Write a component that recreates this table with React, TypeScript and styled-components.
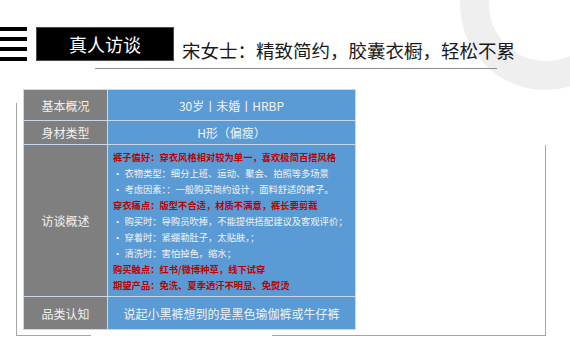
import styled, { createGlobalStyle } from 'styled-components';

const GlobalStyle = createGlobalStyle`
  html, body {
    margin: 0;
    padding: 0;
    background: #ffffff;
  }
  body {
    font-family: 'Noto Sans CJK SC', 'Noto Sans', sans-serif;
  }
`;

type Line = { text: string; hot?: boolean };

const notes: Line[] = [
  { text: '裤子偏好：穿衣风格相对较为单一，喜欢极简百搭风格', hot: true },
  { text: '• 衣物类型：细分上班、运动、聚会、拍照等多场景' },
  { text: '• 考虑因素：：一般购买简约设计，面料舒适的裤子。' },
  { text: '穿衣痛点：版型不合适，材质不满意，裤长要剪裁', hot: true },
  { text: '• 购买时：导购员吹捧，不能提供搭配建议及客观评价；' },
  { text: '• 穿着时：紧绷勒肚子，太贴肤，；' },
  { text: '• 清洗时：害怕掉色，缩水；' },
  { text: '购买触点：红书/微博种草，线下试穿', hot: true },
  { text: '期望产品：免洗、夏季透汗不明显、免熨烫', hot: true },
];

export default function App() {
  return (
    <>
      <GlobalStyle />
      <S.Page>
        <S.Ring width="130" height="100" viewBox="440 0 130 100">
          <circle cx="546" cy="4" r="71.5" fill="none" stroke="#efefef" strokeWidth="29" />
        </S.Ring>

        <S.Header>
          <S.Burger>
            <span />
            <span />
            <span />
            <span />
          </S.Burger>
          <S.TitleBox>真人访谈</S.TitleBox>
          <S.Subtitle>宋女士：精致简约，胶囊衣橱，轻松不累</S.Subtitle>
        </S.Header>
        <S.Rule />

        <S.Frame>
          <S.Table>
            <S.Label $h={30}>基本概况</S.Label>
            <S.Value $h={30}>30岁丨未婚丨HRBP</S.Value>

            <S.Label $h={23}>身材类型</S.Label>
            <S.Value $h={23}>H形（偏瘦）</S.Value>

            <S.Label $h={151}>访谈概述</S.Label>
            <S.Notes>
              {notes.map((n) => (
                <S.Note key={n.text} $hot={n.hot}>
                  {n.text}
                </S.Note>
              ))}
            </S.Notes>

            <S.Label $h={32}>品类认知</S.Label>
            <S.Value $h={32}>说起小黑裤想到的是黑色瑜伽裤或牛仔裤</S.Value>
          </S.Table>
        </S.Frame>
      </S.Page>
    </>
  );
}

const S = {
  Page: styled.div`
    position: relative;
    width: 570px;
    height: 360px;
    overflow: hidden;
    background: #ffffff;
  `,
  Ring: styled.svg`
    position: absolute;
    top: 0;
    right: 0;
    display: block;
  `,
  Header: styled.div`
    position: relative;
    display: flex;
    align-items: flex-end;
    padding-top: 27px;
  `,
  Burger: styled.div`
    display: flex;
    flex-direction: column;
    gap: 6px;
    width: 27px;
    align-self: flex-start;
    span {
      display: block;
      height: 4px;
      background: #000000;
    }
  `,
  TitleBox: styled.div`
    margin-left: 9px;
    width: 136px;
    height: 32px;
    border: 1px solid #4a4a4a;
    background: #000000;
    color: #ffffff;
    font-size: 18px;
    line-height: 32px;
    text-align: center;
    letter-spacing: 0;
  `,
  Subtitle: styled.div`
    margin-left: 8px;
    margin-bottom: 2px;
    font-size: 18.5px;
    line-height: 1;
    color: #1a1a1a;
    white-space: nowrap;
  `,
  Rule: styled.div`
    position: relative;
    margin: 7px 0 0 95px;
    width: 402px;
    height: 1px;
    background: #8c8c8c;
  `,
  Frame: styled.div`
    position: relative;
    margin: 20px 0 0 16px;
    width: 530px;
    height: 247px;
    padding-left: 7px;
    box-sizing: border-box;
    &::before {
      content: '';
      position: absolute;
      left: 0;
      top: 14px;
      bottom: 0;
      width: 74px;
      border-left: 1px solid #a6a6a6;
      border-bottom: 1px solid #a6a6a6;
    }
    &::after {
      content: '';
      position: absolute;
      left: 256px;
      right: 0;
      top: 56px;
      bottom: 0;
      border-right: 1px solid #a6a6a6;
      border-bottom: 1px solid #a6a6a6;
    }
  `,
  Table: styled.div`
    position: relative;
    z-index: 1;
    display: grid;
    grid-template-columns: 83px 247px;
    gap: 1px;
    width: 333px;
    border: 1px solid #c6d9ee;
    background: #c6d9ee;
    box-sizing: border-box;
  `,
  Label: styled.div<{ $h: number }>`
    height: ${({ $h }) => $h}px;
    display: flex;
    align-items: center;
    justify-content: center;
    background: #7f7f7f;
    color: #f2f2f2;
    font-size: 12px;
  `,
  Value: styled.div<{ $h: number }>`
    height: ${({ $h }) => $h}px;
    display: flex;
    align-items: center;
    justify-content: center;
    background: #5b9bd5;
    color: #f2f2f2;
    font-size: 12px;
    white-space: nowrap;
  `,
  Notes: styled.div`
    height: 151px;
    box-sizing: border-box;
    padding: 4px 0 0 5px;
    background: #5b9bd5;
    display: flex;
    flex-direction: column;
  `,
  Note: styled.div<{ $hot?: boolean }>`
    height: 16px;
    line-height: 16px;
    font-size: 9.3px;
    white-space: nowrap;
    color: ${({ $hot }) => ($hot ? '#c00000' : '#f2f2f2')};
    font-weight: ${({ $hot }) => ($hot ? 700 : 400)};
  `,
};
